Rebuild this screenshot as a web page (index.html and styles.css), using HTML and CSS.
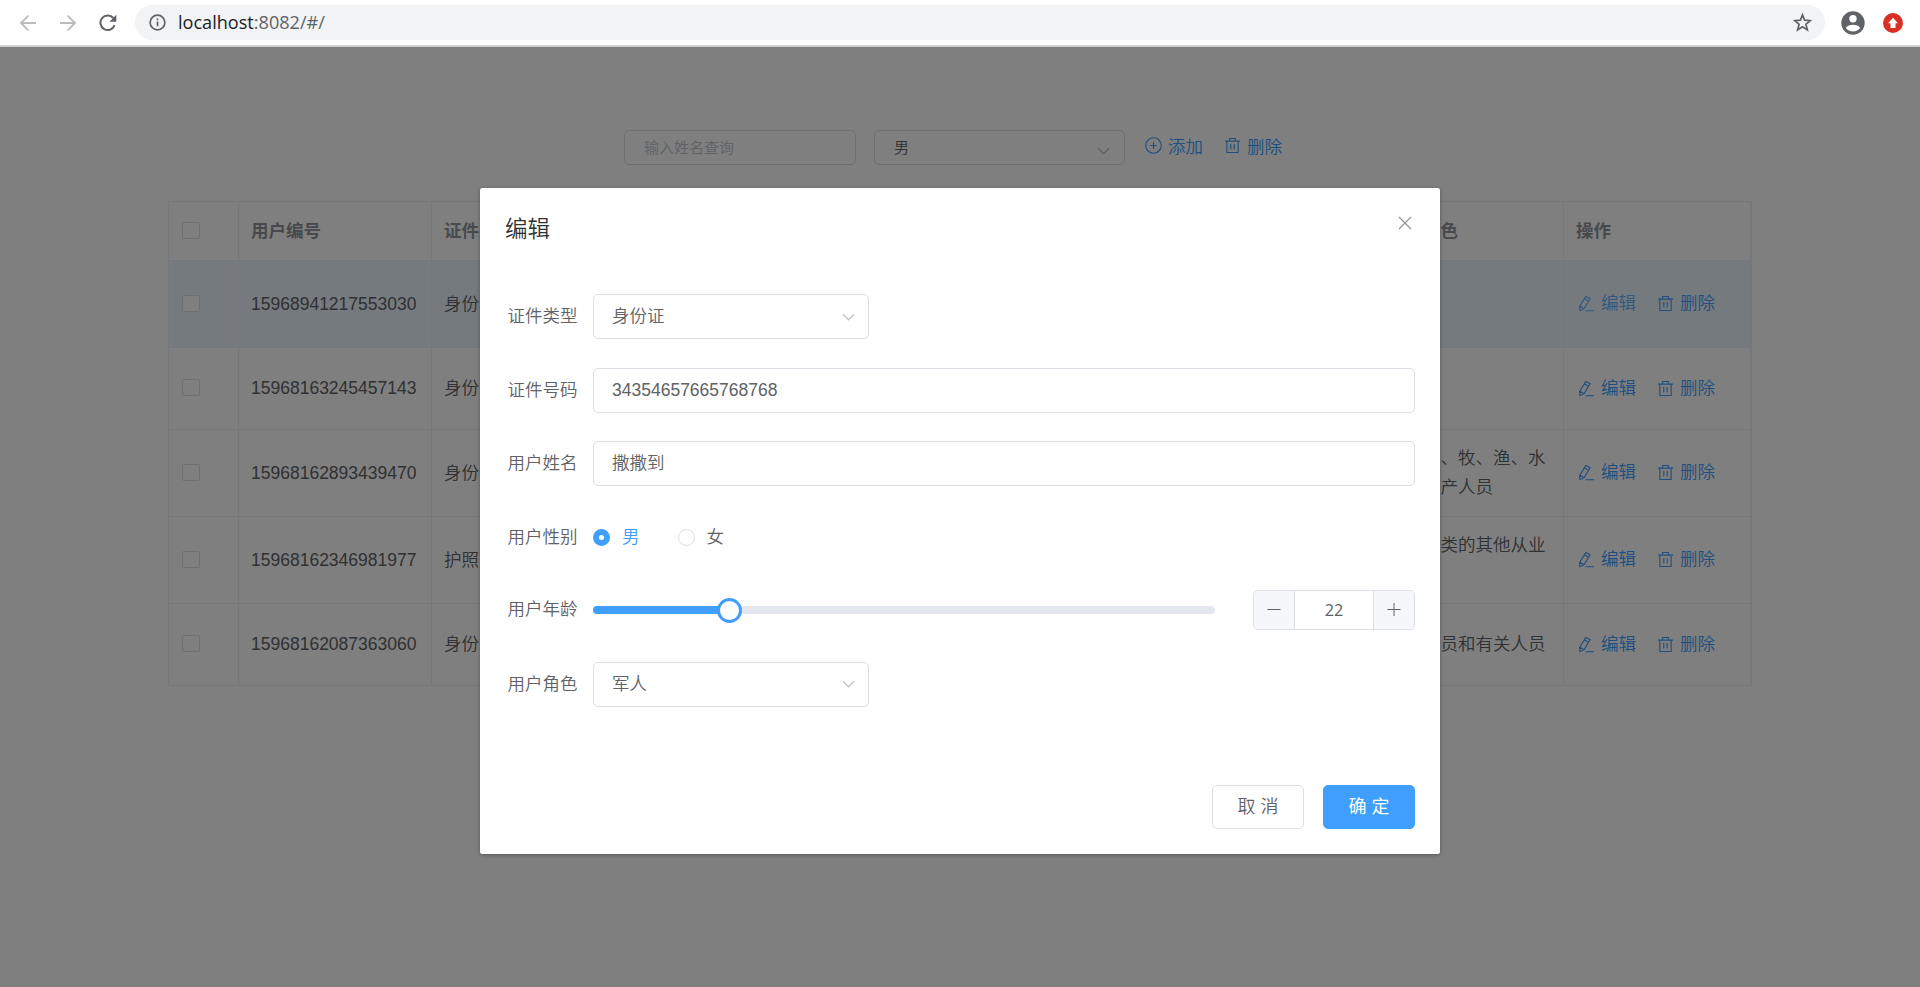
FILE: index.html
```html
<!DOCTYPE html>
<html lang="zh">
<head>
    <meta charset="UTF-8">
    <title>用户管理</title>
    <link rel="stylesheet" href="styles.css">
</head>
<body>

    <svg class="defs">
        <symbol id="edit" viewBox="0 0 18 18">
            <path d="M8.3 1.5 12.8 4 6.5 14.4 2 16.6 1.7 12.1ZM6.8 4.1 11.3 6.7M2 12 6.2 14.3M8 16.7H17"/>
        </symbol>
        <symbol id="trash" viewBox="0 0 18 18">
            <path d="M1 4.3H17M6 4V1.6H12V4M3 4.5V16.4H15V4.5M7.2 7.3V13.3M10.8 7.3V13.3"/>
        </symbol>
        <symbol id="plus-circle" viewBox="0 0 18 18">
            <circle cx="9" cy="9" r="8.2"/><path d="M9 5.4V12.6M5.4 9H12.6"/>
        </symbol>
        <symbol id="arrow" viewBox="0 0 14 8">
            <path d="M1 1 7 7 13 1"/>
        </symbol>
    </svg>

    <div class="browser">
        <svg class="nav" viewBox="0 0 18 18"><path d="M17 9H2M9.3 1.7 2 9 9.3 16.3"/></svg>
        <svg class="nav" viewBox="0 0 18 18"><path d="M1 9H16M8.7 1.7 16 9 8.7 16.3"/></svg>
        <svg class="nav reload" viewBox="0 0 18 18"><path d="M15.6 11.2A7.3 7.3 0 1 1 14.3 4"/><path class="fill" d="M17.3 .8V7.7H10.4Z"/></svg>
        <div class="address">
            <svg class="info" viewBox="0 0 18 18"><circle cx="9" cy="9" r="7.8"/><path d="M9 8V13M9 4.8V6.6"/></svg>
            <span class="url"><b>localhost</b>:8082/#/</span>
            <svg class="star" viewBox="0 0 18 18"><path d="M9 1.8 11 6.8 16.4 7.2 12.2 10.7 13.6 16 9 13.1 4.4 16 5.8 10.7 1.6 7.2 7 6.8Z"/></svg>
        </div>
        <svg class="user" viewBox="0 0 24 24"><circle cx="12" cy="12" r="11.7"/><circle class="hole" cx="12" cy="7.7" r="3.7"/><path class="hole" d="M4.8 17C6 14.6 9 13.8 12 13.8S18 14.6 19.2 17C17.5 19.2 15 20.4 12 20.4S6.5 19.2 4.8 17Z"/></svg>
        <svg class="update" viewBox="0 0 20 20"><circle cx="10" cy="10" r="10"/><path class="hole" d="M10 4.7 15 10.2H12.5V15H7.5V10.2H5Z"/></svg>
    </div>

    <div class="page">
        <div class="toolbar">
            <div class="search">输入姓名查询</div>
            <div class="filter">男<svg class="arrow"><use href="#arrow"/></svg></div>
            <a class="link add"><svg class="icon"><use href="#plus-circle"/></svg>添加</a>
            <a class="link"><svg class="icon"><use href="#trash"/></svg>删除</a>
        </div>

        <table class="table">
            <colgroup>
                <col class="col-check"><col class="col-id"><col><col><col><col><col><col class="col-role"><col class="col-action">
            </colgroup>
            <thead>
                <tr>
                    <th><span class="checkbox"></span></th>
                    <th>用户编号</th><th>证件类型</th><th>证件号码</th><th>用户姓名</th><th>用户性别</th><th>用户年龄</th><th>用户角色</th><th>操作</th>
                </tr>
            </thead>
            <tbody>
                <tr class="current tall">
                    <td><span class="checkbox"></span></td>
                    <td>15968941217553030</td><td>身份证</td><td></td><td></td><td></td><td></td><td>军人</td>
                    <td><div class="actions"><a class="link focus"><svg class="icon"><use href="#edit"/></svg>编辑</a><a class="link"><svg class="icon"><use href="#trash"/></svg>删除</a></div></td>
                </tr>
                <tr>
                    <td><span class="checkbox"></span></td>
                    <td>15968163245457143</td><td>身份证</td><td></td><td></td><td></td><td></td><td>军人</td>
                    <td><div class="actions"><a class="link"><svg class="icon"><use href="#edit"/></svg>编辑</a><a class="link"><svg class="icon"><use href="#trash"/></svg>删除</a></div></td>
                </tr>
                <tr class="tall">
                    <td><span class="checkbox"></span></td>
                    <td>15968162893439470</td><td>身份证</td><td></td><td></td><td></td><td></td><td>农、林、牧、渔、水<br>利业生产人员</td>
                    <td><div class="actions"><a class="link"><svg class="icon"><use href="#edit"/></svg>编辑</a><a class="link"><svg class="icon"><use href="#trash"/></svg>删除</a></div></td>
                </tr>
                <tr class="tall">
                    <td><span class="checkbox"></span></td>
                    <td>15968162346981977</td><td>护照</td><td></td><td></td><td></td><td></td><td>不便分类的其他从业<br>人员</td>
                    <td><div class="actions"><a class="link"><svg class="icon"><use href="#edit"/></svg>编辑</a><a class="link"><svg class="icon"><use href="#trash"/></svg>删除</a></div></td>
                </tr>
                <tr>
                    <td><span class="checkbox"></span></td>
                    <td>15968162087363060</td><td>身份证</td><td></td><td></td><td></td><td></td><td>办事人员和有关人员</td>
                    <td><div class="actions"><a class="link"><svg class="icon"><use href="#edit"/></svg>编辑</a><a class="link"><svg class="icon"><use href="#trash"/></svg>删除</a></div></td>
                </tr>
            </tbody>
        </table>

        <div class="overlay">
            <div class="dialog">
                <div class="dialog-header">
                    <span class="title">编辑</span>
                    <svg class="close" viewBox="0 0 14 14"><path d="M1 1 13 13M13 1 1 13"/></svg>
                </div>
                <div class="form">
                    <div class="item">
                        <label>证件类型</label>
                        <div class="input select">身份证<svg class="arrow"><use href="#arrow"/></svg></div>
                    </div>
                    <div class="item">
                        <label>证件号码</label>
                        <div class="input">34354657665768768</div>
                    </div>
                    <div class="item">
                        <label>用户姓名</label>
                        <div class="input">撒撒到</div>
                    </div>
                    <div class="item">
                        <label>用户性别</label>
                        <div class="radio checked"><span class="dot"></span><span class="text">男</span></div>
                        <div class="radio"><span class="dot"></span><span class="text">女</span></div>
                    </div>
                    <div class="item age">
                        <label>用户年龄</label>
                        <div class="slider">
                            <div class="bar" style="width: 22%"><span class="thumb"></span></div>
                        </div>
                        <div class="number">
                            <span class="step"><svg viewBox="0 0 14 14"><path d="M.5 6.5H13.5"/></svg></span>
                            <span class="value">22</span>
                            <span class="step"><svg viewBox="0 0 14 14"><path d="M.5 6.5H13.5M7 0V13"/></svg></span>
                        </div>
                    </div>
                    <div class="item">
                        <label>用户角色</label>
                        <div class="input select">军人<svg class="arrow"><use href="#arrow"/></svg></div>
                    </div>
                </div>
                <div class="dialog-footer">
                    <button class="btn">取 消</button>
                    <button class="btn primary">确 定</button>
                </div>
            </div>
        </div>
    </div>

</body>
</html>
```
FILE: styles.css
```css
* {
    box-sizing: border-box;
}

body {
    margin: 0;
    height: 987px;
    overflow: hidden;
    font-family: "Liberation Sans", "Noto Sans CJK SC", sans-serif;
    font-size: 17.5px;
    font-weight: 350;
    color: #606266;
    display: flex;
    flex-direction: column;
}

svg {
    display: block;
    flex: none;
    fill: none;
    stroke: currentColor;
}

.defs {
    position: absolute;
    width: 0;
    height: 0;
}

/* browser bar */
.browser {
    height: 47px;
    flex: none;
    display: flex;
    align-items: center;
    padding: 0 17px 0 19px;
    background: #fff;
    border-bottom: 2px solid #d0d1d4;
}

.nav {
    width: 18px;
    height: 18px;
    margin-right: 22px;
    stroke-width: 1.8;
    color: #babcbe;
}

.reload {
    color: #5f6368;
    margin-right: 18px;
    stroke-width: 2;
}

.fill {
    fill: currentColor;
    stroke: none;
}

.address {
    flex: 1;
    height: 35px;
    display: flex;
    align-items: center;
    padding: 0 13px 0 14px;
    border-radius: 18px;
    background: #f1f3f4;
    color: #5f6368;
}

.info {
    width: 17px;
    height: 17px;
    stroke-width: 1.8;
}

.url {
    flex: 1;
    margin: 0 0 2px 12px;
    font-family: "Open Sans", "Noto Sans", sans-serif;
    font-size: 18.1px;
    line-height: 24px;
    font-weight: 400;
}

.url b {
    font-weight: 400;
    color: #202124;
}

.star {
    width: 19px;
    height: 19px;
    stroke-width: 1.6;
}

.user {
    width: 24px;
    height: 24px;
    margin-left: 16px;
    fill: #5f6368;
    stroke: none;
}

.update {
    width: 20px;
    height: 20px;
    margin-left: 18px;
    fill: #d93025;
    stroke: none;
}

.hole {
    fill: #fff;
}

/* user list */
.page {
    position: relative;
    flex: 1;
    padding: 83px 168px 0;
    background: #fff;
}

.toolbar {
    display: flex;
    padding-left: 456px;
}

.search,
.filter {
    height: 35px;
    border: 1px solid #dcdfe6;
    border-radius: 5px;
    padding-left: 19px;
    font-size: 15px;
    line-height: 33px;
}

.search {
    width: 232px;
    margin-right: 18px;
    color: #c0c4cc;
}

.filter {
    width: 251px;
    display: flex;
    justify-content: space-between;
    padding-right: 14px;
}

.arrow {
    width: 13px;
    height: 8px;
    color: #c0c4cc;
    stroke-width: 1.4;
}

.filter .arrow {
    margin-top: 16px;
}

.link {
    display: flex;
    align-items: center;
    height: 32px;
    color: #409eff;
}

.link + .link {
    margin-left: 21px;
}

.toolbar .link {
    height: 31px;
}

.toolbar .add {
    margin-left: 20px;
}

.focus {
    color: #66b1ff;
}

.icon {
    width: 17px;
    height: 17px;
    margin-right: 6px;
    stroke-width: 1.2;
}

.table {
    width: 1584px;
    margin-top: 36px;
    table-layout: fixed;
    border-collapse: separate;
    border-spacing: 0;
    border: 1px solid #ebeef5;
    border-bottom: 0;
}

.col-check {
    width: 70px;
}

.col-id {
    width: 193px;
}

.col-role {
    width: 188px;
}

.col-action {
    width: 187px;
}

.table th,
.table td {
    padding: 0 0 0 12px;
    text-align: left;
    line-height: 28.75px;
    border-right: 1px solid #ebeef5;
    border-bottom: 1px solid #ebeef5;
}

.table th {
    height: 59px;
    font-weight: 700;
    color: #909399;
}

.table td {
    height: 82px;
}

.table .tall td {
    height: 87px;
}

.current td {
    background: #e9f5fd;
}

.checkbox {
    display: block;
    width: 18px;
    height: 17px;
    margin: 0 0 2px 1px;
    border: 1px solid #dcdfe6;
    border-radius: 2px;
    background: #fff;
}

.actions {
    display: flex;
    padding: 0 0 1px 2px;
}

/* dialog */
.overlay {
    position: absolute;
    top: 0;
    left: 0;
    width: 100%;
    height: 100%;
    padding-top: 141px;
    background: rgba(0, 0, 0, 0.5);
}

.dialog {
    width: 960px;
    height: 666px;
    margin: 0 auto;
    padding: 25px;
    display: flex;
    flex-direction: column;
    background: #fff;
    border-radius: 2.5px;
    box-shadow: 0 1px 4px rgba(0, 0, 0, 0.3);
}

.dialog-header {
    display: flex;
    justify-content: space-between;
    height: 30px;
    line-height: 34px;
}

.title {
    font-size: 22.5px;
    color: #303133;
}

.close {
    width: 14px;
    height: 14px;
    margin: 3px 3px 0 0;
    color: #909399;
    stroke-width: 1.2;
}

.form {
    flex: 1;
    margin-top: 51px;
}

.item {
    display: flex;
    align-items: center;
    height: 45px;
    margin-bottom: 28.6px;
}

.item label {
    width: 88px;
    padding-left: 2.5px;
    margin-top: -4px;
}

.input {
    flex: 1;
    height: 45px;
    line-height: 43px;
    padding: 0 13px 0 18px;
    border: 1px solid #dcdfe6;
    border-radius: 5px;
}

.select {
    flex: none;
    width: 276px;
    display: flex;
    align-items: center;
    justify-content: space-between;
}

.radio {
    display: flex;
    align-items: center;
    margin-right: 38px;
}

.radio .text {
    margin-top: -3px;
}

.dot {
    width: 17px;
    height: 17px;
    margin-right: 12px;
    border: 1px solid #dcdfe6;
    border-radius: 50%;
}

.checked {
    color: #409eff;
}

.checked .dot {
    border: 6px solid #409eff;
}

.age {
    margin-top: -1px;
    margin-bottom: 29.6px;
}

.slider {
    width: 622px;
    height: 8px;
    border-radius: 4px;
    background: #e4e7ed;
}

.bar {
    position: relative;
    height: 8px;
    border-radius: 4px 0 0 4px;
    background: #409eff;
}

.thumb {
    position: absolute;
    right: -12px;
    top: -8px;
    width: 25px;
    height: 25px;
    border: 3px solid #409eff;
    border-radius: 50%;
    background: #fff;
}

.number {
    display: flex;
    width: 162px;
    height: 40px;
    margin-left: 38px;
    border: 1px solid #dcdfe6;
    border-radius: 5px;
    overflow: hidden;
}

.step {
    width: 40px;
    display: flex;
    align-items: center;
    justify-content: center;
    background: #f5f7fa;
}

.step svg {
    width: 14px;
    height: 14px;
}

.value {
    flex: 1;
    border: 1px solid #dcdfe6;
    border-width: 0 1px;
    text-align: center;
    font-family: "Open Sans", sans-serif;
    font-size: 16.25px;
    font-weight: 400;
    line-height: 39px;
}

.dialog-footer {
    display: flex;
    justify-content: flex-end;
}

.btn {
    width: 92px;
    height: 44px;
    margin-left: 19px;
    padding: 0 0 4px;
    border: 1px solid #dcdfe6;
    border-radius: 5px;
    background: #fff;
    color: #606266;
    font-family: inherit;
    font-size: 18px;
    font-weight: 350;
}

.primary {
    background: #409eff;
    border-color: #409eff;
    color: #fff;
    font-weight: 400;
}
```
